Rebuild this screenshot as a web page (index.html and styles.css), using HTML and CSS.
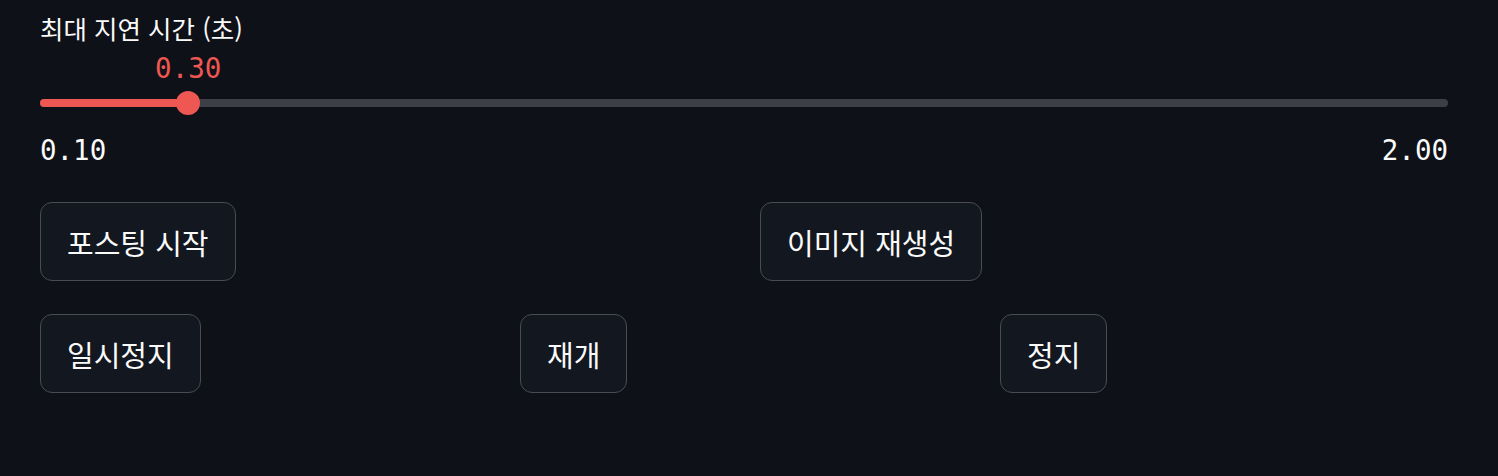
FILE: index.html
```html
<!DOCTYPE html>
<html lang="ko">
<head>
<meta charset="utf-8">
<link rel="stylesheet" href="styles.css">
</head>
<body>
<main class="page">
  <section class="slider-block">
    <div class="label">최대 지연 시간 (초)</div>
    <div class="slider">
      <div class="value-row">
        <span class="value" style="left: 10.526%">0.30</span>
      </div>
      <div class="track">
        <div class="fill" style="width: 10.526%"></div>
        <div class="thumb" style="left: 10.526%"></div>
      </div>
      <div class="ticks">
        <span>0.10</span>
        <span>2.00</span>
      </div>
    </div>
  </section>
  <section class="row cols-2">
    <div class="col"><button class="btn">포스팅 시작</button></div>
    <div class="col"><button class="btn">이미지 재생성</button></div>
  </section>
  <section class="row cols-3">
    <div class="col"><button class="btn">일시정지</button></div>
    <div class="col"><button class="btn">재개</button></div>
    <div class="col"><button class="btn">정지</button></div>
  </section>
</main>
</body>
</html>
```

FILE: styles.css
```css
html, body {
  margin: 0;
  padding: 0;
  background: #0e1117;
  color: #fafafa;
  font-family: "Noto Sans CJK KR", "Noto Sans", sans-serif;
}

.page {
  padding: 10px 50px 0 40px;
  display: flex;
  flex-direction: column;
}

.label {
  font-size: 25.5px;
  font-weight: 400;
  line-height: 36px;
  letter-spacing: 0;
  color: #fafafa;
}

.slider {
  display: flex;
  flex-direction: column;
}

.value-row {
  position: relative;
  height: 40px;
}

.value {
  position: absolute;
  top: 6px;
  transform: translateX(-50%);
  font-family: "DejaVu Sans Mono", "Liberation Mono", monospace;
  font-size: 27.5px;
  line-height: 32px;
  color: #ee5752;
}

.track {
  position: relative;
  height: 8px;
  border-radius: 4px;
  background: #3d3f47;
  margin-top: 13px;
}

.fill {
  height: 100%;
  border-radius: 4px;
  background: #ee5752;
}

.thumb {
  position: absolute;
  top: 50%;
  width: 24px;
  height: 24px;
  border-radius: 50%;
  background: #ee5752;
  transform: translate(-50%, -50%);
}

.ticks {
  display: flex;
  justify-content: space-between;
  margin-top: 27px;
  font-family: "DejaVu Sans Mono", "Liberation Mono", monospace;
  font-size: 27.5px;
  line-height: 32px;
  color: #fafafa;
}

.row {
  display: grid;
  column-gap: 32px;
}

.cols-2 {
  grid-template-columns: 1fr 1fr;
  margin-top: 36px;
}

.cols-3 {
  grid-template-columns: 1fr 1fr 1fr;
  margin-top: 33px;
}

.col {
  display: flex;
  align-items: flex-start;
}

.btn {
  font-family: "Noto Sans CJK KR", "Noto Sans", sans-serif;
  font-size: 29px;
  font-weight: 400;
  line-height: 40px;
  color: #fafafa;
  background: #131720;
  border: 1.5px solid #4a4c53;
  border-radius: 12px;
  padding: 18px 26px;
  height: 79px;
  cursor: pointer;
}
```
